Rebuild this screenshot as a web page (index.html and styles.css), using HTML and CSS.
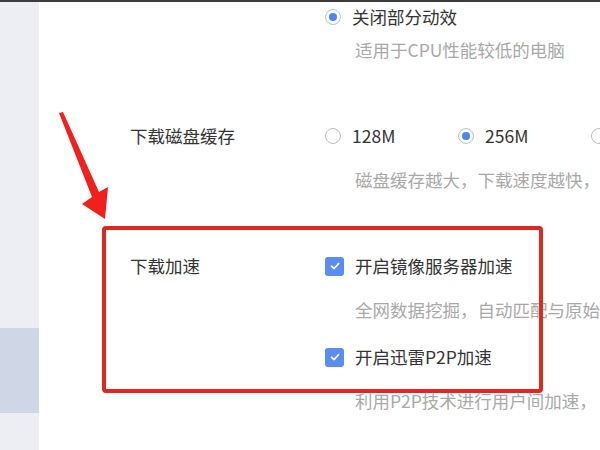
FILE: index.html
```html
<!DOCTYPE html>
<html lang="zh-CN">

<head>
    <meta charset="UTF-8">
    <meta name="viewport" content="width=device-width, initial-scale=1.0">
    <title>下载设置</title>

    <link rel="stylesheet" href="styles.css">
</head>

<body>
    <div class="topbar"></div>

    <div class="window">
        <div class="sidebar">
            <div class="nav-item active"></div>
        </div>

        <div class="content">
            <!-- 动效设置（上半部分已滚出） -->
            <div class="section">
                <div class="label"></div>
                <div class="options">
                    <div class="option">
                        <span class="radio checked"></span>
                        <span class="option-text">关闭部分动效</span>
                    </div>
                    <div class="desc tight">适用于CPU性能较低的电脑</div>
                </div>
            </div>

            <div class="section">
                <div class="label">下载磁盘缓存</div>
                <div class="options">
                    <div class="radio-row">
                        <div class="option radio-item">
                            <span class="radio"></span>
                            <span class="option-text">128M</span>
                        </div>
                        <div class="option radio-item">
                            <span class="radio checked"></span>
                            <span class="option-text">256M</span>
                        </div>
                        <div class="option radio-item">
                            <span class="radio"></span>
                        </div>
                    </div>
                    <div class="desc">磁盘缓存越大，下载速度越快，</div>
                </div>
            </div>

            <div class="section">
                <div class="label">下载加速</div>
                <div class="options">
                    <div class="option-block">
                        <div class="option">
                            <span class="checkbox checked">
                                <svg width="12" height="12" viewBox="0 0 12 12"><path d="M2.5 6.2 L5 8.6 L9.6 3.6" fill="none" stroke="#fff" stroke-width="1.6" stroke-linecap="round" stroke-linejoin="round"/></svg>
                            </span>
                            <span class="option-text">开启镜像服务器加速</span>
                        </div>
                        <div class="desc">全网数据挖掘，自动匹配与原始</div>
                    </div>
                    <div class="option-block">
                        <div class="option">
                            <span class="checkbox checked">
                                <svg width="12" height="12" viewBox="0 0 12 12"><path d="M2.5 6.2 L5 8.6 L9.6 3.6" fill="none" stroke="#fff" stroke-width="1.6" stroke-linecap="round" stroke-linejoin="round"/></svg>
                            </span>
                            <span class="option-text">开启迅雷P2P加速</span>
                        </div>
                        <div class="desc">利用P2P技术进行用户间加速，</div>
                    </div>
                </div>
            </div>
        </div>
    </div>

    <!-- 标注 -->
    <div class="mark-box"></div>
    <svg class="mark-arrow" width="60" height="120" viewBox="0 0 60 120">
        <polygon points="1,1 5,0 41,80 50,75 47,107 24,92 34,85" fill="#f0201c"/>
    </svg>
</body>

</html>
```

FILE: styles.css
```css
* {
    box-sizing: border-box;
}

body {
    margin: 0;
    position: relative;
    height: 450px;
    overflow: hidden;
    background-color: #fff;
    font-family: "Noto Sans CJK SC", "Noto Sans", sans-serif;
    font-size: 17.5px;
    color: #333;
}

.topbar {
    height: 2px;
    background-color: #3c3c3c;
}

.window {
    display: flex;
    height: 448px;
}

.sidebar {
    width: 39px;
    flex-shrink: 0;
    background-color: #eceef3;
}

.nav-item {
    height: 85px;
}

.nav-item.active {
    margin-top: 326px;
    background-color: #cfd6e6;
}

.content {
    flex: 1;
    padding: 3px 0 0 91px;
    white-space: nowrap;
}

.section {
    display: flex;
    margin-bottom: 62px;
}

.label {
    width: 195px;
    flex-shrink: 0;
    line-height: 24px;
}

.option {
    display: flex;
    align-items: center;
    height: 24px;
    line-height: 24px;
}

.radio-row {
    display: flex;
}

.radio-item {
    width: 133px;
    flex-shrink: 0;
}

.radio {
    position: relative;
    width: 16px;
    height: 16px;
    margin-right: 11px;
    border: 1px solid #bdbdbd;
    border-radius: 50%;
    flex-shrink: 0;
}

.radio.checked {
    border: 1.5px solid #a7c2f4;
}

.radio.checked::after {
    content: "";
    position: absolute;
    left: 2.5px;
    top: 2.5px;
    width: 8px;
    height: 8px;
    border-radius: 50%;
    background-color: #4a86ee;
}

.checkbox {
    display: flex;
    align-items: center;
    justify-content: center;
    width: 19px;
    height: 19px;
    margin-right: 11px;
    border-radius: 3px;
    flex-shrink: 0;
    background-color: #5b8def;
}

.option-block + .option-block {
    margin-top: 23px;
}

.desc {
    margin-top: 20px;
    padding-left: 30px;
    line-height: 24px;
    color: #a8a8a8;
}

.desc.tight {
    margin-top: 9px;
}

.mark-box {
    position: absolute;
    left: 102px;
    top: 226px;
    width: 441px;
    height: 167px;
    border: 4px solid #e0281e;
    border-radius: 4px;
}

.mark-arrow {
    position: absolute;
    left: 58px;
    top: 112px;
}
```
